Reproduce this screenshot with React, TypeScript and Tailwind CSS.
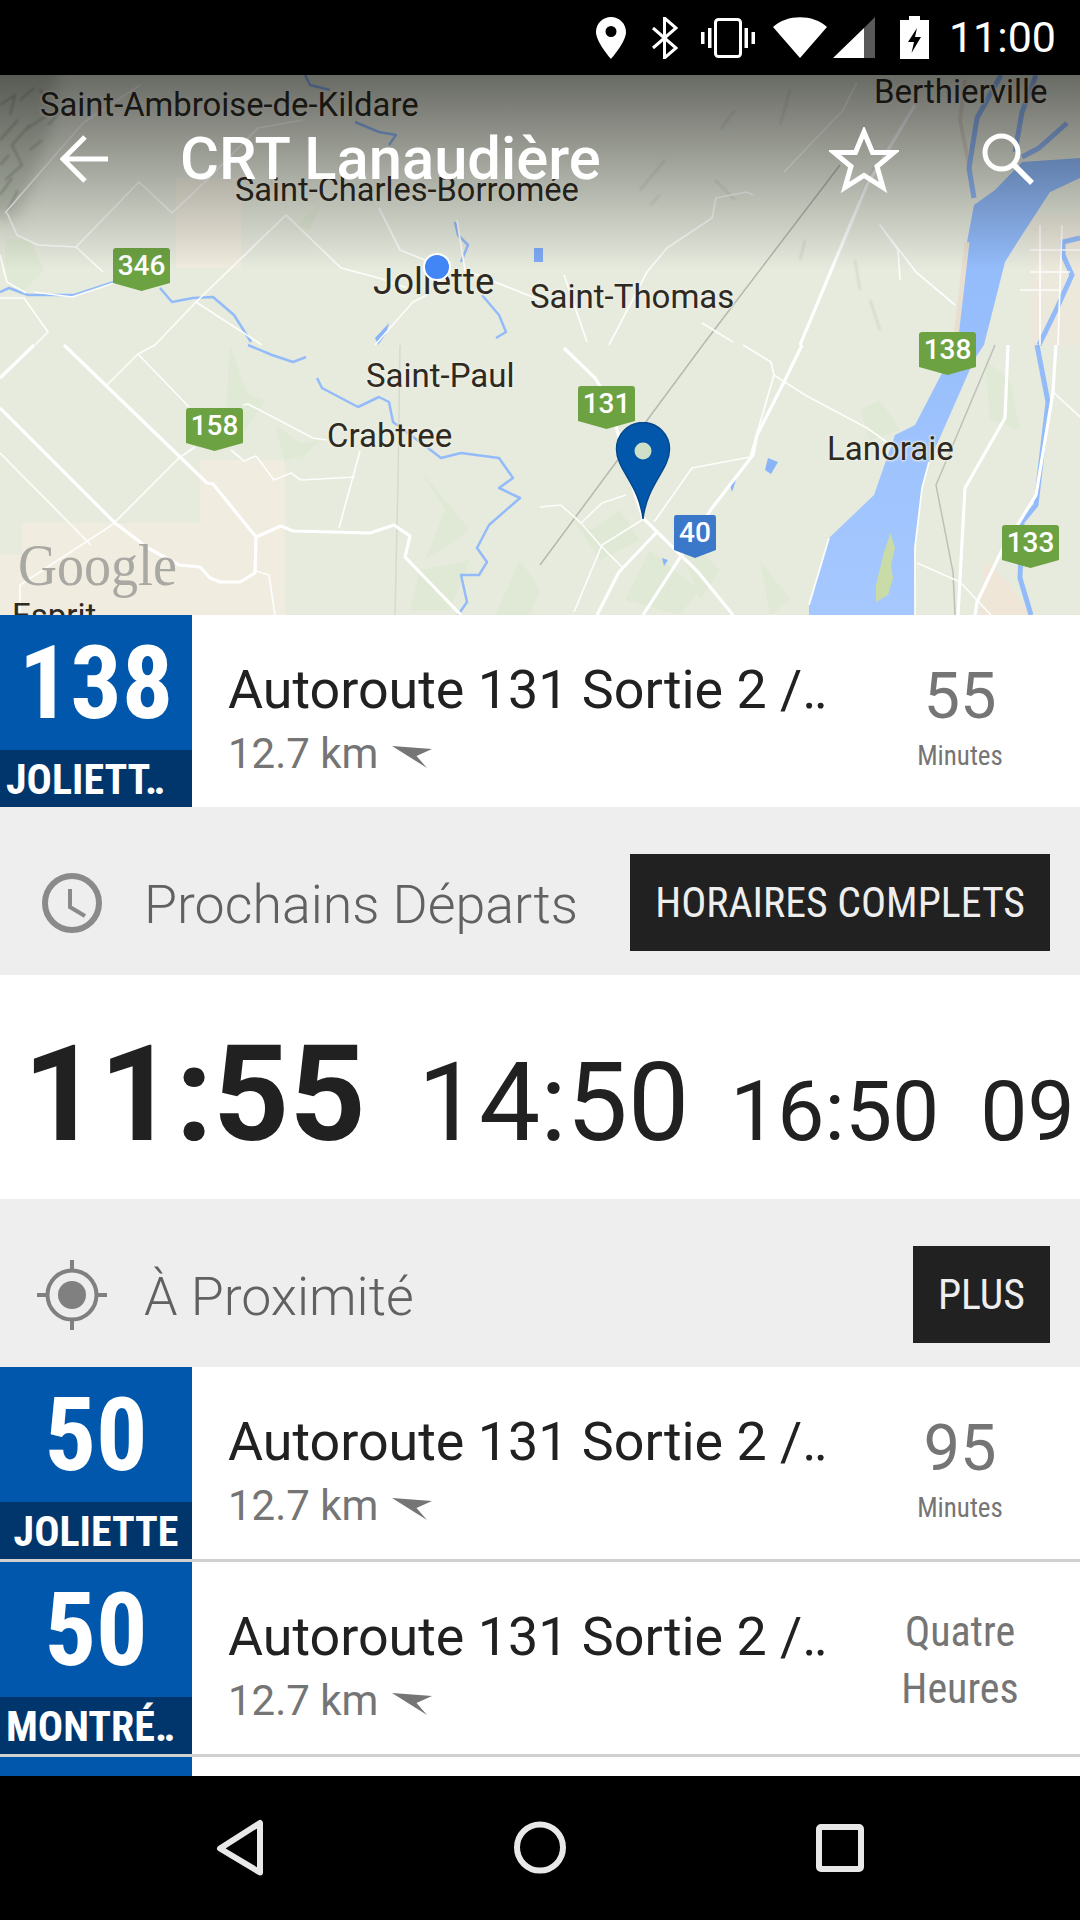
import type { ReactNode } from 'react'

const ROBOTO = 'font-["Roboto",sans-serif]'

// roads in page coordinates, the svg's viewBox starts at y=75
const THICK_ROADS = [
  '64,345 207,483 213,484 256,537 281,526 293,531 370,533 394,525 410,536 405,557 461,615',
  '0,408 115,523 148,548 179,565 200,567 210,578 220,582 240,582 255,573 256,537',
  '564,348 595,378 609,400 630,478 643,518 698,572 733,615',
  '802,345 784,382 757,435 753,455 712,508 643,615',
  '800,345 843,242 867,185 915,105',
  '1008,345 1005,418 965,488 958,615',
  '1056,345 1053,392 1036,495 1001,552 977,602 975,615',
  '657,532 619,572 597,615',
  '34,345 0,378',
]

const THIN_ROADS = [
  '0,298 24,298 48,332 35,345',
  '0,453 91,545',
  '114,523 179,458 195,447',
  '115,523 20,585 20,615',
  '107,385 138,354 189,407',
  '138,354 155,345',
  '243,405 248,404 313,438 327,440',
  '231,450 244,461 256,456 274,480 291,473 301,480 355,477',
  '360,451 339,528',
  '253,570 269,575 275,615',
  '5,213 83,123 140,85',
  '7,213 17,235 38,245 76,247 139,182 172,213 207,180 258,128 303,120',
  '76,247 103,272',
  '114,283 72,297 34,292',
  '286,215 196,302 155,345',
  '286,215 341,268 379,278 413,290',
  '196,302 262,345',
  '0,255 7,282 26,293',
  '379,208 400,250 430,262',
  '457,220 465,270 540,300',
  '375,345 413,302 427,295',
  '609,345 647,272 667,248 712,218 716,198 747,192 753,195',
  '784,172 843,110 857,82',
  '743,345 771,362 774,375 805,395 867,428 891,445',
  '774,375 750,457 692,468 654,522',
  '564,275 587,342',
  '702,323 733,342',
  '561,505 581,523 600,545 623,568',
  '642,520 602,545 574,612',
  '626,495 602,503 581,523',
  '540,507 561,505',
  '917,563 960,582 991,615',
  '1053,392 1080,417',
  '900,280 898,250 880,225 916,272 955,305',
  '1030,250 1080,250',
  '1030,272 1070,272',
  '1020,290 1060,290',
  '1040,225 1040,345',
  '1062,225 1058,345',
  '915,615 915,548 922,488 929,462',
  '829,538 809,605',
]

const RIVERS = [
  '248,345 272,355 293,362 306,357',
  '317,378 322,388 358,407 379,397 389,402 393,422 424,445 441,458 461,453 499,458 513,478 499,488 520,498 489,525 477,548 487,562 479,575 461,575 467,602 458,615',
  '0,292 9,288 28,295 74,295 114,282',
  '160,288 172,302 193,298 213,297 234,315 251,342',
  '455,222 458,235 468,245 461,262',
  '482,295 499,315 506,332 496,338',
  '305,75 310,85 330,90',
  '355,122 379,132 396,135 389,145',
  '1001,75 977,118 969,168 974,198',
  '1036,75 1022,112 1015,152',
  '1067,123 1039,148 1022,157',
  '1037,345 1048,402 1036,505 1022,522 1020,578 1031,615',
  '1080,238 1063,242 1063,255 1072,275 1057,308 1039,345',
]

const PARKS = [
  '5,238 30,240 44,270 20,295 5,280',
  '230,345 248,395 265,400 240,440 225,425',
  '275,425 310,450 285,462',
  '300,445 320,440 300,460',
  '420,470 445,510 425,560 470,530',
  '420,570 470,560 450,610 410,610',
  '560,500 590,530 620,510 640,540 600,560',
  '650,550 700,590 680,615 625,600',
  '670,520 720,570 700,600',
  '860,410 880,400 900,430 870,440',
  '495,615 520,560 540,590 530,615',
  '760,560 790,600 770,615',
  '985,360 1010,380 1020,430 990,420',
  '296,225 320,205 310,230',
]

function MapLabel({ children, className }: { children: ReactNode; className: string }) {
  return (
    <span
      className={`absolute ${ROBOTO} leading-none whitespace-nowrap text-[#2e2a22] [text-shadow:0_0_3px_#eef0e6,0_0_3px_#eef0e6,0_0_3px_#eef0e6] ${className}`}
    >
      {children}
    </span>
  )
}

function Shield({ label, className, blue }: { label: string; className: string; blue?: boolean }) {
  return (
    <div className={`absolute h-[43px] ${className}`}>
      <svg viewBox="0 0 57 43" preserveAspectRatio="none" className="absolute inset-0 h-full w-full">
        <path
          d="M3 0H54Q57 0 57 3V35L28.500 43L0 35V3Q0 0 3 0Z"
          fill={blue ? '#3b78c9' : '#6da243'}
        />
      </svg>
      <span className={`relative flex h-[36px] items-center justify-center ${ROBOTO} text-[28px] font-medium text-white`}>
        {label}
      </span>
    </div>
  )
}

function MapView() {
  return (
    <div className="relative h-[540px] w-full overflow-hidden bg-[#e7ebde]">
      <svg viewBox="0 75 1080 540" className="absolute inset-0 h-full w-full">
        <defs>
          <filter id="soft" x="-40%" y="-40%" width="180%" height="180%"><feGaussianBlur stdDeviation="8" /></filter>
          <filter id="softer" x="-20%" y="-20%" width="140%" height="140%"><feGaussianBlur stdDeviation="1.200" /></filter>
          <linearGradient id="water" x1="0" y1="0" x2="0" y2="1">
            <stop offset="0" stopColor="#8fb9fa" />
            <stop offset="1" stopColor="#a6c8ff" />
          </linearGradient>
        </defs>

        {/* beige land */}
        <path d="M176 178H241V268H176Z" fill="#f0ecdf" />
        <path d="M200 460H285V523H285V615H0V555H22V523H200Z" fill="#f0ecdf" />
        <path d="M1030 215H1080V345H1030Z" fill="#ece8dc" />
        <path d="M985 560L1010 585L1030 615H980Z" fill="#efe6d8" />

        {/* hill shading, top left */}
        <g filter="url(#soft)" fill="#7f8a78">
          <path d="M-20 60H60L50 130L30 190L15 220L-20 215Z" opacity="0.35" />
        </g>
        <g fill="none" stroke="#4c5248" strokeWidth="1.500" opacity="0.4" filter="url(#softer)">
          <path d="M5 180L22 165L12 145L30 125M40 90L55 110L25 130M0 140L18 120M8 210L18 190M0 105L15 95L10 115M30 150L42 140M0 165L9 155M20 100L34 88M48 125L60 112M0 195L12 178" />
        </g>

        {/* terrain flecks east of Joliette */}
        <g fill="none" stroke="#8f958a" strokeWidth="1.500" opacity="0.3" filter="url(#softer)">
          <path d="M735 110L720 130M790 90L780 125M665 160L640 190M860 200L875 165M660 195L650 205M805 240L800 260M855 260L860 290M870 300L880 330M715 180L735 200" />
        </g>

        {PARKS.map((p, i) => (
          <polygon key={i} points={p} fill="#dfe9d2" opacity="0.8" />
        ))}

        {/* St. Lawrence */}
        <path
          d="M1080 158L1022 162L995 190L974 205L967 242L955 345L941 375L915 425L895 435L874 495L829 538L809 605V615H915L914 548L922 488L929 462L953 408L974 360L984 345L1005 262L1022 235L1050 192L1080 178Z"
          fill="url(#water)"
        />
        <path d="M970 170L960 120L965 80" fill="none" stroke="#dcd6c8" strokeWidth="4" />
        <path d="M955 345L967 242" fill="none" stroke="#e8dfd0" strokeWidth="5" />
        <path d="M890.500 533L895 548L891 565L893 578L888 595L876 602V585L884 552Z" fill="#c9dba6" />

        {RIVERS.map((p, i) => (
          <polyline key={i} points={p} fill="none" stroke="#94bbf9" strokeWidth={i > 7 ? 5 : 2.5} strokeLinejoin="round" />
        ))}

        {/* ponds */}
        <path d="M534 248H543V262H534Z" fill="#7faaf5" />
        <path d="M375 338L389 323L386 334L378 345Z" fill="#8ab4f8" />
        <path d="M768 458L778 462L771 474L765 470Z" fill="#8ab4f8" />
        <path d="M730 485L736 480L732 492Z" fill="#8ab4f8" />
        <path d="M662 558L668 560L664 566Z" fill="#8ab4f8" />

        {/* rail lines */}
        <polyline points="840,165 705,342 540,565" fill="none" stroke="#b4b8af" strokeWidth="1.500" />
        <polyline points="995,345 936,485 953,572 955,615" fill="none" stroke="#bcc0b7" strokeWidth="1.500" />
        <polyline points="400,345 398,480 395,615" fill="none" stroke="#d6d9cf" strokeWidth="1.500" />

        {THIN_ROADS.map((p, i) => (
          <polyline key={i} points={p} fill="none" stroke="#fdfdfb" strokeWidth="1.700" strokeLinejoin="round" />
        ))}
        {THICK_ROADS.map((p, i) => (
          <polyline key={i} points={p} fill="none" stroke="#ffffff" strokeWidth="3.200" strokeLinejoin="round" />
        ))}
      </svg>

      <MapLabel className="left-[40px] top-[14px] text-[32.800px]">Saint-Ambroise-de-Kildare</MapLabel>
      <MapLabel className="left-[235px] top-[99px] text-[32.600px]">Saint-Charles-Borromée</MapLabel>
      <MapLabel className="left-[373px] top-[189px] text-[36.500px]">Joliette</MapLabel>
      <MapLabel className="left-[530px] top-[205px] text-[33px]">Saint-Thomas</MapLabel>
      <MapLabel className="left-[874px] top-[0px] text-[33px]">Berthierville</MapLabel>
      <MapLabel className="left-[366px] top-[284px] text-[33px]">Saint-Paul</MapLabel>
      <MapLabel className="left-[327px] top-[344px] text-[33px]">Crabtree</MapLabel>
      <MapLabel className="left-[827px] top-[357px] text-[33px]">Lanoraie</MapLabel>

      <Shield label="346" className="left-[113px] top-[173px] w-[57px]" />
      <Shield label="158" className="left-[186px] top-[333px] w-[57px]" />
      <Shield label="131" className="left-[578px] top-[311px] w-[57px]" />
      <Shield label="138" className="left-[919px] top-[257px] w-[57px]" />
      <Shield label="133" className="left-[1002px] top-[450px] w-[57px]" />
      <Shield label="40" className="left-[674px] top-[440px] w-[42px]" blue />

      <span className="absolute left-[18px] top-[460px] origin-left scale-x-[0.9] font-['Liberation_Serif',serif] text-[60px] leading-none text-[#a9a8a2] [text-shadow:0_0_2px_#f2efe6]">
        Google
      </span>
      <span className={`absolute left-[12px] top-[524px] ${ROBOTO} text-[33px] leading-none text-[#2e2a22]`}>
        Esprit
      </span>

      {/* stop marker */}
      <svg viewBox="0 0 56 98" className="absolute left-[615px] top-[347px] h-[98px] w-[56px]">
        <path
          d="M28 97C24 62 1.500 48 1.500 27A26.500 26.500 0 1 1 54.500 27C54.500 48 32 62 28 97Z"
          fill="#0257aa"
          stroke="#04498f"
          strokeWidth="1.500"
        />
        <circle cx="28" cy="29" r="8.500" fill="#cfe0c8" />
      </svg>

      <div className="absolute inset-x-0 top-0 h-[195px] bg-gradient-to-b from-black/55 to-transparent" />

      {/* current position */}
      <div className="absolute left-[423px] top-[178px] h-[28px] w-[28px] rounded-full border-2 border-white bg-[#4285f4]" />

      {/* toolbar over the map */}
      <svg viewBox="0 0 48 48" className="absolute left-[60px] top-[60px] h-[48px] w-[48px]">
        <path d="M48 24H3M25 2L3 24L25 46" fill="none" stroke="#fff" strokeWidth="5" />
      </svg>
      <span className={`absolute left-[180px] top-[55px] ${ROBOTO} text-[59.700px] font-medium leading-none whitespace-nowrap text-white`}>
        CRT Lanaudière
      </span>
      <svg viewBox="0 0 70 66" className="absolute left-[829px] top-[52px] h-[66px] w-[70px]">
        <path
          d="M35 5L43.500 25.500H65L48 39.500L54 60.500L35 48.500L16 60.500L22 39.500L5 25.500H26.500Z"
          fill="none"
          stroke="#fff"
          strokeWidth="5"
        />
      </svg>
      <svg viewBox="0 0 52 52" className="absolute left-[982px] top-[58px] h-[52px] w-[52px]">
        <circle cx="19.500" cy="19.500" r="16.500" fill="none" stroke="#fff" strokeWidth="5" />
        <path d="M31 31L50 50" fill="none" stroke="#fff" strokeWidth="5.500" />
      </svg>
    </div>
  )
}

function StatusBar() {
  return (
    <div className="relative flex h-[75px] shrink-0 items-center justify-end bg-black pr-[24px]">
      <svg viewBox="0 0 30 42" className="mr-[26px] h-[42px] w-[30px]">
        <path
          fillRule="evenodd"
          d="M15 0C6.700 0 0 6.700 0 15C0 25 15 42 15 42S30 25 30 15C30 6.700 23.300 0 15 0ZM15 20A5.500 5.500 0 1 1 15 9A5.500 5.500 0 0 1 15 20Z"
          fill="#fff"
        />
      </svg>
      <svg viewBox="0 0 26 42" className="mr-[23px] h-[42px] w-[26px]">
        <path d="M1 11L24 31L12.500 41V1L24 11L1 31" fill="none" stroke="#fff" strokeWidth="3" />
      </svg>
      <svg viewBox="0 0 54 40" className="mr-[18px] h-[40px] w-[54px]">
        <rect x="14.500" y="1.500" width="25" height="37" rx="3" fill="none" stroke="#fff" strokeWidth="3" />
        <path d="M7 10H10.500V30H7ZM0 14H3.500V26H0ZM43.500 10H47V30H43.500ZM50.500 14H54V26H50.500Z" fill="#fff" />
      </svg>
      <svg viewBox="0 0 54 41" className="mr-[6px] h-[41px] w-[54px]">
        <path d="M27 41L0 10C14 -3 40 -3 54 10Z" fill="#fff" />
      </svg>
      <svg viewBox="0 0 42 41" className="mr-[25px] h-[41px] w-[42px]">
        <path d="M42 0L31 11V41H42Z" fill="#595959" />
        <path d="M31 11L0 41H31Z" fill="#fff" />
      </svg>
      <svg viewBox="0 0 29 43" className="mr-[20px] h-[43px] w-[29px]">
        <path
          fillRule="evenodd"
          d="M9 0H20V4H29V43H0V4H9ZM17 12L8 26H14L11.500 37L21 21H15Z"
          fill="#fff"
        />
      </svg>
      <span className={`${ROBOTO} text-[43px] leading-none text-white`}>11:00</span>
    </div>
  )
}

function Row({
  route,
  destination,
  truncated,
  children,
  divider,
}: {
  route: string
  destination: string
  truncated?: boolean
  children: ReactNode
  divider?: boolean
}) {
  return (
    <div className={`flex shrink-0 bg-white ${divider ? 'h-[195px] border-b-[3px] border-[#d0d0d0]' : 'h-[192px]'}`}>
      <div className="flex w-[192px] shrink-0 flex-col">
        <div className={`flex h-[135px] items-center justify-center bg-[#0057ab] ${ROBOTO} text-[102px] font-bold leading-none text-white [font-stretch:75%]`}>
          {route}
        </div>
        <div
          className={`flex h-[57px] items-center bg-[#00366b] pt-[3px] ${truncated ? 'justify-start pl-[6px]' : 'justify-center'} ${ROBOTO} text-[42px] font-bold leading-none whitespace-nowrap text-white [font-stretch:75%]`}
        >
          {destination}
        </div>
      </div>
      <div className="flex min-w-0 flex-1 flex-col pl-[36px] pt-[44px]">
        <div className={`${ROBOTO} text-[53.800px] leading-[62px] whitespace-nowrap text-[#212121]`}>
          Autoroute 131 Sortie 2 /‥
        </div>
        <div className={`mt-[8px] flex items-center ${ROBOTO} text-[42px] leading-[50px] text-[#757575]`}>
          12.7 km
          <svg viewBox="0 0 40 22" className="ml-[14px] mt-[6px] h-[22px] w-[40px]">
            <path d="M0 0L40 3L24.500 10L35 22Z" fill="#757575" />
          </svg>
        </div>
      </div>
      <div className="flex w-[240px] shrink-0 flex-col items-center justify-center">{children}</div>
    </div>
  )
}

function Eta({ value }: { value: string }) {
  return (
    <div className="flex flex-col items-center pt-[11px]">
      <span className={`${ROBOTO} text-[65px] leading-[70px] text-[#757575]`}>{value}</span>
      <span className={`mt-[8px] ${ROBOTO} text-[27px] leading-[34px] text-[#757575] [font-stretch:75%]`}>Minutes</span>
    </div>
  )
}

function Section({ icon, title, action }: { icon: ReactNode; title: string; action: string }) {
  return (
    <div className="flex h-[168px] shrink-0 items-center bg-[#eeeeee] pr-[30px] pt-[23px]">
      <div className="flex w-[144px] shrink-0 justify-center">{icon}</div>
      <span className={`mt-[4px] flex-1 ${ROBOTO} text-[53.700px] font-light leading-none whitespace-nowrap text-[#616161]`}>{title}</span>
      <button className={`flex h-[97px] items-center bg-[#212121] px-[25px] ${ROBOTO} text-[41.800px] leading-none whitespace-nowrap text-[#eeeeee] [font-stretch:75%]`}>
        {action}
      </button>
    </div>
  )
}

export default function App() {
  return (
    <div className="flex h-[1920px] w-[1080px] flex-col overflow-hidden bg-white">
      <StatusBar />
      <MapView />
      <Row route="138" destination="JOLIETT‥" truncated>
        <Eta value="55" />
      </Row>
      <Section
        title="Prochains Départs"
        action="HORAIRES COMPLETS"
        icon={
          <svg viewBox="0 0 60 60" className="h-[60px] w-[60px]">
            <circle cx="30" cy="30" r="27" fill="none" stroke="#8a8a8a" strokeWidth="6" />
            <path d="M28 16V34L43 43" fill="none" stroke="#8a8a8a" strokeWidth="4" />
          </svg>
        }
      />
      <div className={`flex h-[224px] shrink-0 items-baseline overflow-hidden whitespace-nowrap bg-white pl-[23px] pt-[53px] ${ROBOTO} leading-none text-[#212121]`}>
        <span className="text-[133px] font-bold">11:55</span>
        <span className="ml-[52px] text-[109px]">14:50</span>
        <span className="ml-[41px] text-[84px]">16:50</span>
        <span className="ml-[41px] text-[84px]">09</span>
      </div>
      <Section
        title="À Proximité"
        action="PLUS"
        icon={
          <svg viewBox="0 0 70 70" className="h-[70px] w-[70px]">
            <circle cx="35" cy="35" r="24.500" fill="none" stroke="#808080" strokeWidth="4" />
            <circle cx="35" cy="35" r="14" fill="#808080" />
            <path d="M35 0V11M35 59V70M0 35H11M59 35H70" stroke="#808080" strokeWidth="4" />
          </svg>
        }
      />
      <Row route="50" destination="JOLIETTE" divider>
        <Eta value="95" />
      </Row>
      <Row route="50" destination="MONTRÉ‥" truncated divider>
        <div className="flex flex-col items-center pt-[4px]">
          <span className={`${ROBOTO} text-[42px] leading-[57px] text-[#757575] [font-stretch:75%]`}>Quatre</span>
          <span className={`${ROBOTO} text-[42px] leading-[57px] text-[#757575] [font-stretch:75%]`}>Heures</span>
        </div>
      </Row>
      <div className="flex min-h-0 flex-1 bg-white">
        <div className="w-[192px] bg-[#0057ab]" />
      </div>
      <div className="flex h-[144px] shrink-0 items-center bg-black">
        <svg viewBox="0 0 1080 144" className="h-full w-full">
          <path d="M260 47V96.500L220 72.500Z" fill="none" stroke="#e8e8e8" strokeWidth="6" strokeLinejoin="round" />
          <circle cx="540" cy="71.500" r="23" fill="none" stroke="#e8e8e8" strokeWidth="6" />
          <rect x="819" y="51" width="42" height="42" rx="2" fill="none" stroke="#e8e8e8" strokeWidth="6" />
        </svg>
      </div>
    </div>
  )
}
